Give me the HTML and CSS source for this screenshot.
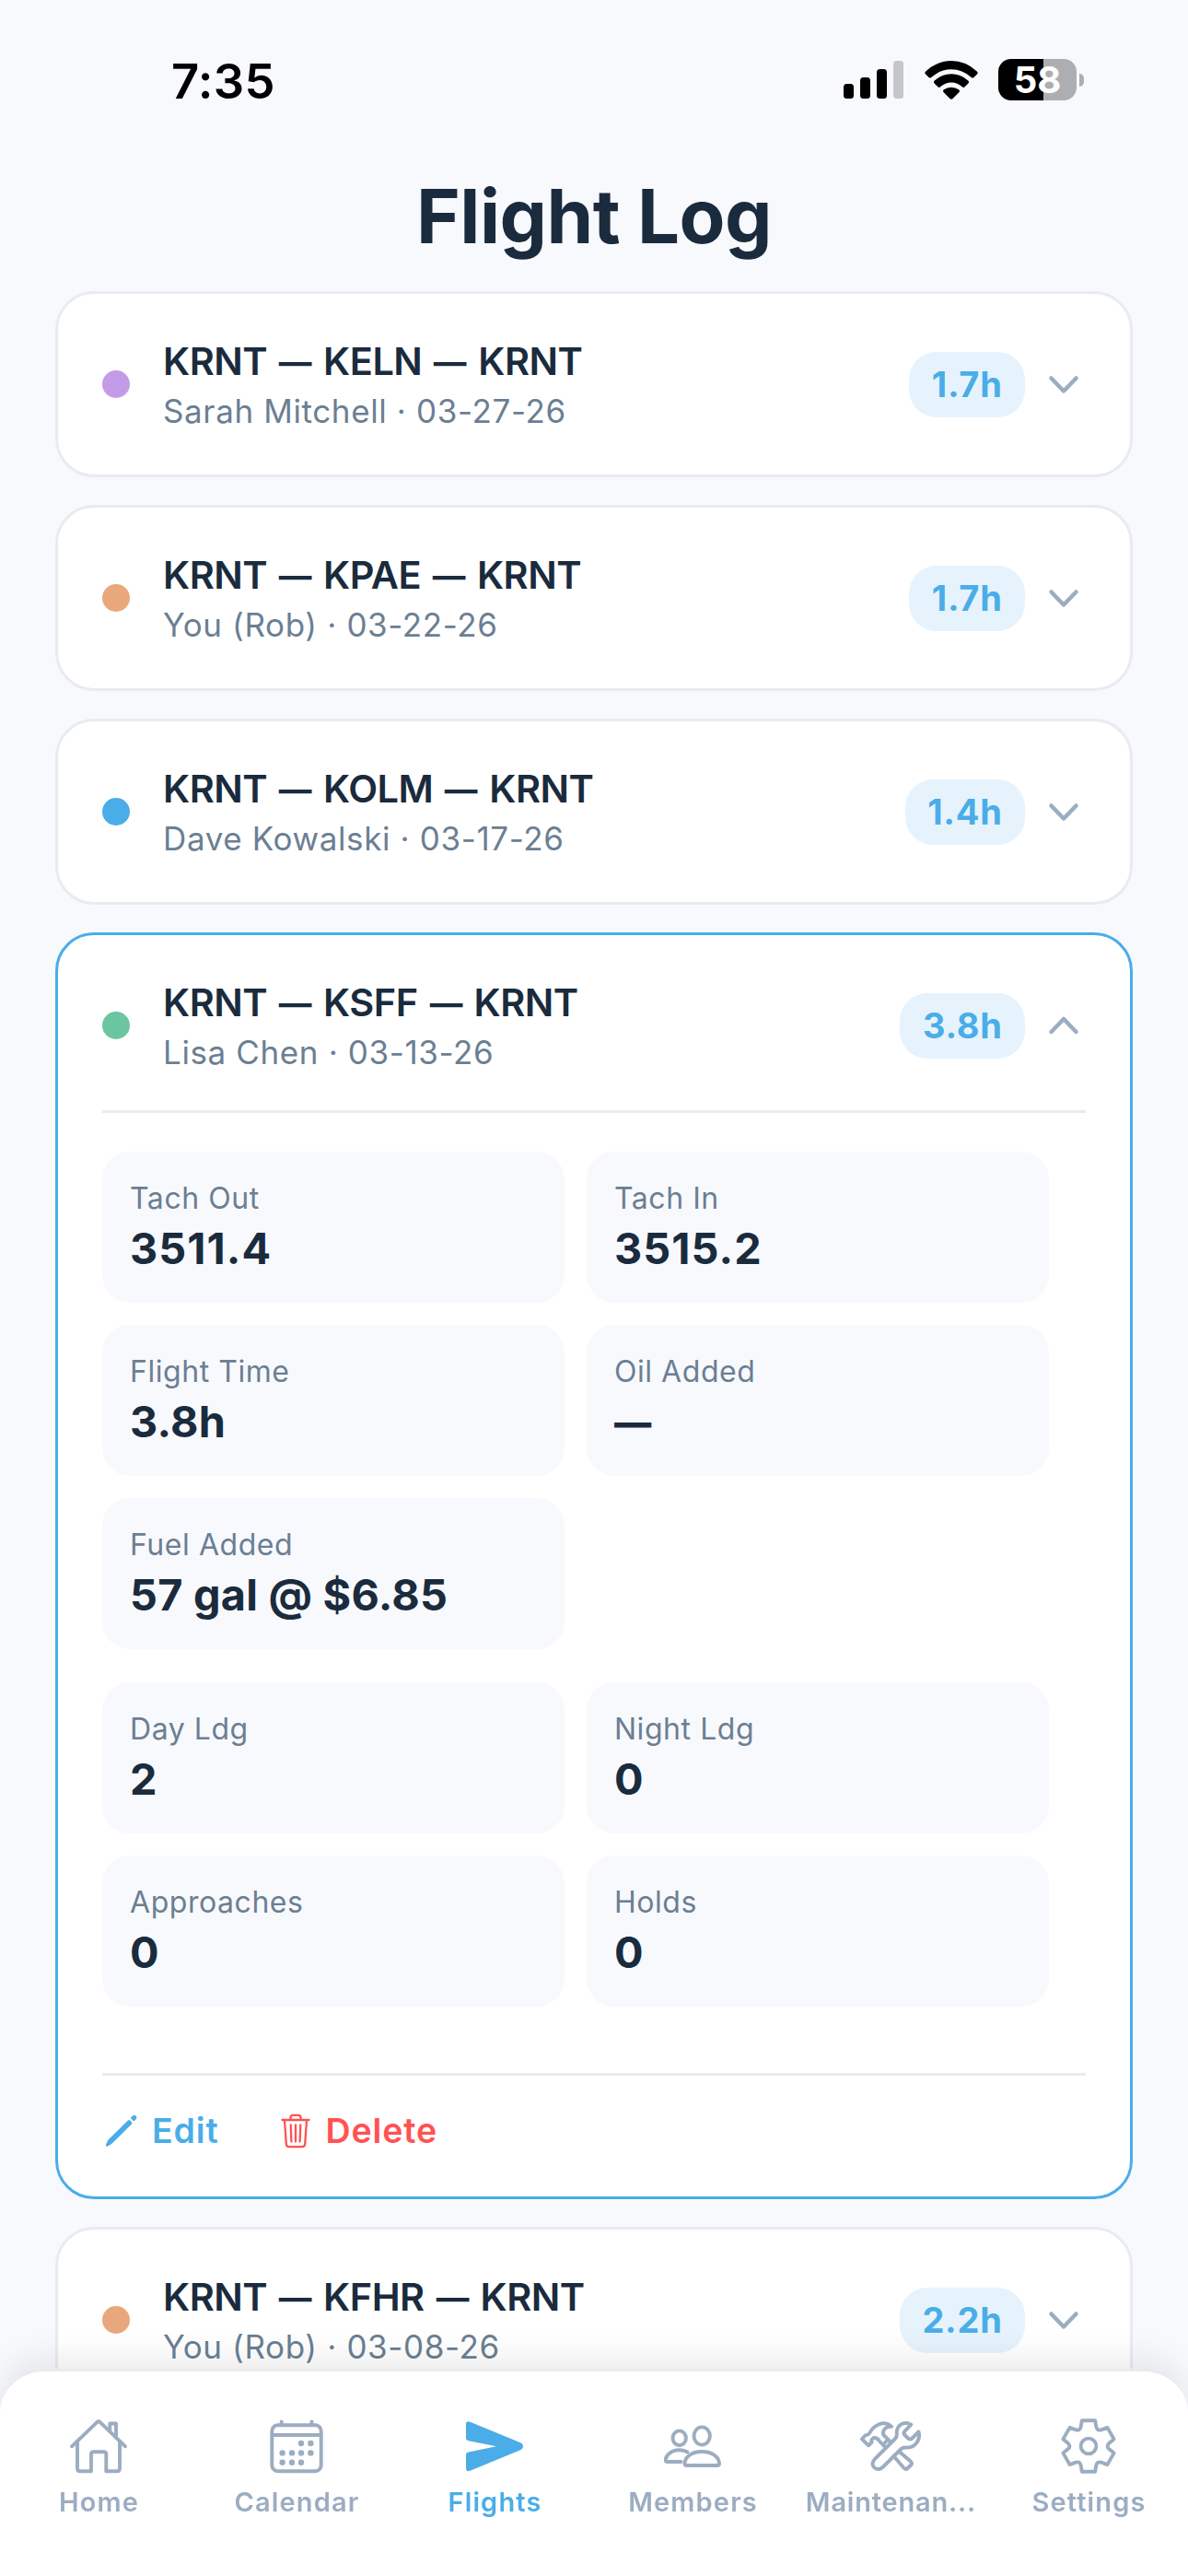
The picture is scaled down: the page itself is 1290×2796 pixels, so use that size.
FILE: index.html
```html
<!DOCTYPE html>
<html lang="en">
<head>
    <meta charset="UTF-8">
    <title>Flight Log</title>
    <link rel="stylesheet" href="styles.css">
</head>
<body>
    <div class="status-bar">
        <span class="time">7:35</span>
        <div class="status-icons">
            <svg class="signal" width="65" height="41" viewBox="0 0 65 41">
                <rect x="0" y="25" width="11" height="16" rx="3.5"/>
                <rect x="18" y="18" width="11" height="23" rx="3.5"/>
                <rect x="36" y="9" width="11" height="32" rx="3.5"/>
                <rect x="54" y="0" width="11" height="41" rx="3.5" fill="#c5c6c9"/>
            </svg>
            <svg class="wifi" width="58" height="42" viewBox="0 0 58 42">
                <path d="M1.2 11.4Q-.4 13 1 14.5L4.6 18q1.3 1.2 2.7 0Q17 9.3 29 9.3T50.7 18q1.4 1.2 2.7 0l3.6-3.5q1.400-1.500-.2-3.100Q44.500 0 29 0T1.200 11.400Z"/>
                <path d="M10.800 21.400q-1.600 1.600-.2 3l3.800 3.900q1.200 1.200 2.700 0 5.300-4.800 11.900-4.800t11.900 4.800q1.500 1.200 2.700 0l3.800-3.900q1.400-1.400-.2-3Q39 14.300 29 14.300T10.800 21.400Z"/>
                <path d="M20.900 31.300q-1.600 1.400-.2 2.900l6.700 6.900q1.600 1.400 3.200 0l6.700-6.900q1.400-1.500-.2-2.900-3.600-2.600-8.100-2.600t-8.100 2.600Z"/>
            </svg>
            <div class="battery">
                <span class="battery-body">58</span>
                <span class="battery-tip"></span>
            </div>
        </div>
    </div>

    <h1 class="page-title">Flight Log</h1>

    <div class="flight-list">
        <div class="flight-card">
            <div class="flight-head">
                <span class="dot purple"></span>
                <div class="flight-info">
                    <div class="route">KRNT <span class="dash">—</span> KELN <span class="dash">—</span> KRNT</div>
                    <div class="meta">Sarah Mitchell · 03-27-26</div>
                </div>
                <span class="hours">1.7h</span>
                <svg class="chevron" viewBox="0 0 48 48"><path d="M10.5 17.5L24 31.5L37.5 17.5"/></svg>
            </div>
        </div>

        <div class="flight-card">
            <div class="flight-head">
                <span class="dot orange"></span>
                <div class="flight-info">
                    <div class="route">KRNT <span class="dash">—</span> KPAE <span class="dash">—</span> KRNT</div>
                    <div class="meta">You (Rob) · 03-22-26</div>
                </div>
                <span class="hours">1.7h</span>
                <svg class="chevron" viewBox="0 0 48 48"><path d="M10.5 17.5L24 31.5L37.5 17.5"/></svg>
            </div>
        </div>

        <div class="flight-card">
            <div class="flight-head">
                <span class="dot blue"></span>
                <div class="flight-info">
                    <div class="route">KRNT <span class="dash">—</span> KOLM <span class="dash">—</span> KRNT</div>
                    <div class="meta">Dave Kowalski · 03-17-26</div>
                </div>
                <span class="hours">1.4h</span>
                <svg class="chevron" viewBox="0 0 48 48"><path d="M10.5 17.5L24 31.5L37.5 17.5"/></svg>
            </div>
        </div>

        <div class="flight-card open">
            <div class="flight-head">
                <span class="dot green"></span>
                <div class="flight-info">
                    <div class="route">KRNT <span class="dash">—</span> KSFF <span class="dash">—</span> KRNT</div>
                    <div class="meta">Lisa Chen · 03-13-26</div>
                </div>
                <span class="hours">3.8h</span>
                <svg class="chevron" viewBox="0 0 48 48"><path d="M10.5 31L24 17L37.5 31"/></svg>
            </div>

            <div class="details">
                <div class="tiles">
                    <div class="tile"><div class="label">Tach Out</div><div class="value tach">3511.4</div></div>
                    <div class="tile"><div class="label">Tach In</div><div class="value tach">3515.2</div></div>
                    <div class="tile"><div class="label">Flight Time</div><div class="value">3.8h</div></div>
                    <div class="tile"><div class="label">Oil Added</div><div class="value"><span class="dash">—</span></div></div>
                    <div class="tile"><div class="label">Fuel Added</div><div class="value">57 gal @ $6.85</div></div>
                </div>
                <div class="tiles">
                    <div class="tile"><div class="label">Day Ldg</div><div class="value">2</div></div>
                    <div class="tile"><div class="label">Night Ldg</div><div class="value">0</div></div>
                    <div class="tile"><div class="label">Approaches</div><div class="value">0</div></div>
                    <div class="tile"><div class="label">Holds</div><div class="value">0</div></div>
                </div>
            </div>

            <div class="actions">
                <a class="action edit">
                    <svg viewBox="0 0 42 42" fill="currentColor">
                        <path d="M4.200 37.300Q3.600 36.600 4.100 35.400L6.300 30.800L28 9.400Q29 8.500 30 9.400L32 11.400Q32.900 12.400 32 13.400L10.200 35L5.900 37.400Q4.800 37.900 4.200 37.300Z"/>
                        <path d="M31.300 7.500Q30.600 6.700 31.400 5.900L33 4.400Q34.900 3 36.600 4.500Q38.200 6.300 36.800 8.100L35.200 9.800Q34.400 10.500 33.600 9.800Z"/>
                    </svg>
                    Edit
                </a>
                <a class="action delete">
                    <svg viewBox="0 0 42 42" fill="none" stroke="currentColor" stroke-width="2.3" stroke-linecap="round" stroke-linejoin="round">
                        <path d="M6.500 9H35.500M15.500 8.500V6.300Q15.500 3.800 18 3.800H24Q26.500 3.800 26.500 6.300V8.500"/>
                        <path d="M9 9.500L10.800 35.200Q11 38.200 14 38.200H28Q31 38.200 31.200 35.200L33 9.500M15.700 14.500L16.400 32.500M21 14.500V32.500M26.300 14.500L25.600 32.500"/>
                    </svg>
                    Delete
                </a>
            </div>
        </div>

        <div class="flight-card">
            <div class="flight-head">
                <span class="dot orange"></span>
                <div class="flight-info">
                    <div class="route">KRNT <span class="dash">—</span> KFHR <span class="dash">—</span> KRNT</div>
                    <div class="meta">You (Rob) · 03-08-26</div>
                </div>
                <span class="hours">2.2h</span>
                <svg class="chevron" viewBox="0 0 48 48"><path d="M10.5 17.5L24 31.5L37.5 17.5"/></svg>
            </div>
        </div>
    </div>

    <nav class="tab-bar">
        <a class="tab">
            <svg viewBox="0 0 72 72">
                <path d="M7 36.300L34 10.300Q36 8.500 38 10.300L65 36.300"/>
                <path d="M13 31V60.300Q13 63.300 16 63.300H28V45Q28 42.300 30.700 42.300H41.600Q44.300 42.300 44.300 45V63.300H56Q59 63.300 59 60.300V31"/>
                <path d="M48.300 20V11.500H55V27"/>
            </svg>
            <span>Home</span>
        </a>
        <a class="tab">
            <svg viewBox="0 0 72 72">
                <rect x="9.300" y="13.300" width="53.400" height="50" rx="6.500"/>
                <path d="M9.300 24H62.700M19.700 9.500V13M52.500 9.500V13"/>
                <g class="dots">
                    <circle cx="41" cy="33" r="3.200"/><circle cx="51.400" cy="33" r="3.200"/>
                    <circle cx="20.600" cy="43.400" r="3.200"/><circle cx="31" cy="43.400" r="3.200"/><circle cx="41" cy="43.400" r="3.200"/><circle cx="51.400" cy="43.400" r="3.200"/>
                    <circle cx="20.600" cy="53.700" r="3.200"/><circle cx="31" cy="53.700" r="3.200"/><circle cx="41" cy="53.700" r="3.200"/>
                </g>
            </svg>
            <span>Calendar</span>
        </a>
        <a class="tab active">
            <svg viewBox="0 0 72 72">
                <path class="solid" d="M5 12.500Q5 8.200 9.500 9.700L63.500 32Q67 33.600 67 36.200T63.500 40.500L9.500 62.700Q5 64.300 5 60V45.500Q5 43 7.800 42.400L38 36.300L7.800 30.300Q5 29.700 5 27Z"/>
            </svg>
            <span>Flights</span>
        </a>
        <a class="tab">
            <svg viewBox="0 0 72 72">
                <ellipse cx="46.200" cy="25" rx="8.700" ry="9.600"/>
                <ellipse cx="21.700" cy="27.300" rx="7.200" ry="7.900"/>
                <path d="M27.500 55C27.500 48.500 34.500 42 46.200 42S65 48.500 65 55Q65 57 63 57H29.500Q27.500 57 27.500 55Z"/>
                <path d="M30.500 42.500Q27 40.300 21.700 40.300C12.500 40.300 6.800 46.500 6.800 51Q6.800 53 8.800 53H23.500"/>
            </svg>
            <span>Members</span>
        </a>
        <a class="tab maintenance">
            <svg viewBox="0 0 72 72">
                <path d="M58.300 12.600C50 8 42 14 42.800 22.500Q43 26 41 28L18.800 50.200Q14.500 55 18.300 59.200Q23 63 27.500 59L46 40.500Q48.500 37.500 52 37.500C62 38.500 69 30 66.500 20.500L59.500 27.500Q57.500 29.500 55 27.500L51.500 24Q49.500 22 51.500 19.800Z"/>
                <path d="M37 14.800C29 7 17.500 13 12.500 23L8.500 24.500L5 28.300L12 35.300L15.500 32Q14.500 29 17.500 27Q21.500 26.500 23.500 30L29.500 36.500M37 14.800C30.500 14 26.500 19.500 28.500 24L35.500 31M32.500 29.500L28 34.500"/>
                <path d="M39.500 47L50.500 59.800Q52.500 62 54.500 60L58 56.800Q60 54.800 58 52.800L45.500 42"/>
            </svg>
            <span>Maintenan...</span>
        </a>
        <a class="tab">
            <svg viewBox="0 0 72 72">
                <path d="M28.800 8.300H43.200L44.200 14.500Q45.200 20.200 50.500 18.100L56.400 15.900L63.600 28.400L58.700 32.400Q54.300 36 58.700 39.600L63.600 43.600L56.400 56.100L50.500 53.900Q45.200 51.800 44.200 57.500L43.200 63.700H28.800L27.800 57.500Q26.800 51.800 21.500 53.900L15.600 56.100L8.400 43.600L13.300 39.600Q17.700 36 13.300 32.400L8.400 28.400L15.600 15.900L21.500 18.100Q26.800 20.200 27.800 14.500Z"/>
                <circle cx="36" cy="36" r="8.400"/>
            </svg>
            <span>Settings</span>
        </a>
    </nav>
</body>
</html>
```

FILE: styles.css
```css
* {
    box-sizing: border-box;
}
body {
    margin: 0;
    height: 2796px;
    overflow: hidden;
    background: #f8f9fd;
    color: #1a2b3d;
    font-family: Inter, "Liberation Sans", sans-serif;
}

/* status bar */
.status-bar {
    display: flex;
    justify-content: space-between;
    align-items: center;
    height: 173px;
    padding: 0 113px 0 186px;
    color: #000;
}
.time {
    padding-top: 3px;
    font-size: 52.5px;
    font-weight: 600;
    letter-spacing: 0.3px;
}
.status-icons {
    display: flex;
    align-items: center;
}
.wifi {
    margin-left: 23px;
    margin-right: 22px;
}
.battery {
    display: flex;
    align-items: center;
    gap: 3px;
}
.battery-body {
    width: 85px;
    height: 45px;
    border-radius: 14px;
    background: linear-gradient(90deg, #000 49px, #adaeb1 49px);
    color: #fff;
    font-size: 40px;
    font-weight: 700;
    line-height: 45px;
    text-align: center;
}
.battery-tip {
    width: 5px;
    height: 14px;
    border-radius: 0 5px 5px 0;
    background: #adaeb1;
}

.page-title {
    margin: 12px 0 31px;
    font-size: 81.5px;
    font-weight: 700;
    line-height: 100px;
    letter-spacing: -0.5px;
    text-align: center;
}

/* flights */
.flight-list {
    display: flex;
    flex-direction: column;
    gap: 30px;
    padding: 0 60px;
}
.flight-card {
    padding: 48px;
    border: 3px solid #e8ebf0;
    border-radius: 42px;
    background: #fff;
}
.flight-card.open {
    border-color: #4aade8;
}
.flight-head {
    display: flex;
    align-items: center;
    height: 100px;
}
.dot {
    width: 30px;
    height: 30px;
    border-radius: 50%;
}
.purple { background: #c39be8; }
.orange { background: #e8a87c; }
.blue { background: #4aade8; }
.green { background: #6cc5a1; }
.flight-info {
    flex: 1;
    margin-left: 36px;
}
.route {
    font-size: 41.5px;
    font-weight: 600;
    line-height: 50px;
    letter-spacing: -0.5px;
}
.dash {
    display: inline-block;
    transform: translateY(1px) scaleX(0.86);
}
.meta {
    margin-top: 8px;
    color: #6b7f93;
    font-size: 35px;
    line-height: 42px;
    letter-spacing: 0.62px;
}
.hours {
    padding: 0 24.5px;
    border-radius: 30px;
    background: #e6f3fd;
    color: #4aade8;
    font-size: 38px;
    font-weight: 700;
    line-height: 71px;
    letter-spacing: 0.7px;
}
.chevron {
    width: 48px;
    height: 48px;
    margin-left: 18px;
    fill: none;
    stroke: #9cadc1;
    stroke-width: 4.5;
    stroke-linecap: round;
    stroke-linejoin: round;
}

/* expanded card */
.details {
    display: flex;
    flex-direction: column;
    gap: 36px;
    margin-top: 42px;
    padding: 42px 0 72px;
    border-top: 3px solid #e8ebf0;
    border-bottom: 3px solid #e8ebf0;
}
.tiles {
    display: flex;
    flex-wrap: wrap;
    gap: 24px;
}
.tile {
    width: 47%;
    height: 164px;
    padding: 30px;
    border-radius: 30px;
    background: #f8f9fd;
}
.label {
    color: #6b7f93;
    font-size: 32px;
    line-height: 41px;
    letter-spacing: 0.55px;
}
.value {
    margin-top: 6px;
    font-size: 46.8px;
    font-weight: 700;
    line-height: 57px;
    letter-spacing: 0.25px;
}
.value.tach {
    letter-spacing: 1.1px;
}
.value .dash {
    transform-origin: left;
}
.actions {
    display: flex;
    gap: 62px;
    padding-top: 36px;
}
.action {
    display: flex;
    align-items: center;
    gap: 12px;
    height: 47px;
    font-size: 37.5px;
    font-weight: 600;
    letter-spacing: 0.85px;
}
.action svg {
    width: 42px;
    height: 42px;
}
.edit { color: #4aade8; }
.delete { color: #ff5252; }

/* bottom tabs */
.tab-bar {
    position: fixed;
    left: 0;
    right: 0;
    bottom: 0;
    display: flex;
    height: 225px;
    padding-top: 45px;
    border-top: 3px solid #e8ebf0;
    border-radius: 48px 48px 0 0;
    background: #fff;
    box-shadow: 0 -12px 36px rgba(0, 0, 0, 0.08);
}
.tab {
    flex: 1 1 0;
    display: flex;
    flex-direction: column;
    align-items: center;
    gap: 7px;
    color: #9cadc1;
    font-size: 29px;
    font-weight: 600;
    line-height: 36px;
    letter-spacing: 1.15px;
}
.tab.active {
    color: #4aade8;
}
.tab.maintenance {
    letter-spacing: 0.8px;
}
.tab svg {
    width: 72px;
    height: 72px;
    margin-right: 2px;
    fill: none;
    stroke: currentColor;
    stroke-width: 3.9;
    stroke-linecap: round;
    stroke-linejoin: round;
}
.tab .solid,
.tab .dots {
    fill: currentColor;
    stroke: none;
}
```
